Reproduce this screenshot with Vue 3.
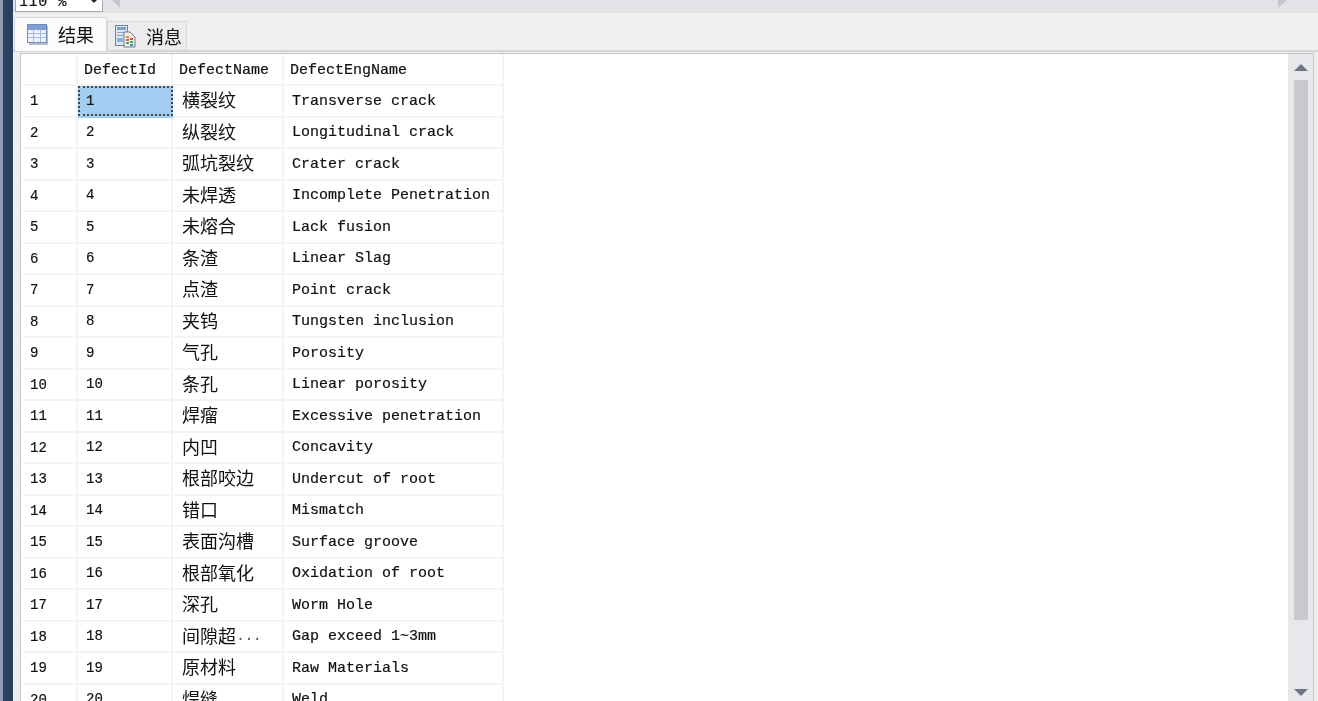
<script setup>
const rows = [
  ['横裂纹', 'Transverse crack'],
  ['纵裂纹', 'Longitudinal crack'],
  ['弧坑裂纹', 'Crater crack'],
  ['未焊透', 'Incomplete Penetration'],
  ['未熔合', 'Lack fusion'],
  ['条渣', 'Linear Slag'],
  ['点渣', 'Point crack'],
  ['夹钨', 'Tungsten inclusion'],
  ['气孔', 'Porosity'],
  ['条孔', 'Linear porosity'],
  ['焊瘤', 'Excessive penetration'],
  ['内凹', 'Concavity'],
  ['根部咬边', 'Undercut of root'],
  ['错口', 'Mismatch'],
  ['表面沟槽', 'Surface groove'],
  ['根部氧化', 'Oxidation of root'],
  ['深孔', 'Worm Hole'],
  ['间隙超', 'Gap exceed 1~3mm', '...'],
  ['原材料', 'Raw Materials'],
  ['焊缝', 'Weld'],
]
</script>

<template>
  <div class="page">
    <div class="edge"></div>
    <div class="main">
      <div class="topbar">
        <div class="combo">
          <span class="combo-text">110 %</span>
          <svg class="combo-arrow" width="12" height="6" viewBox="0 0 12 6"><path d="M1 0h10L6 5z" fill="#222"/></svg>
        </div>
        <svg class="hs-left" width="8" height="8" viewBox="0 0 8 8"><path d="M0 0h8v8z" fill="#c6c6ca"/></svg>
        <div class="spacer"></div>
        <svg class="hs-right" width="9" height="8" viewBox="0 0 9 8"><path d="M0 0h9L0 8z" fill="#c6c6ca"/></svg>
      </div>
      <div class="tabs">
        <div class="tab active">
          <svg width="21" height="21" viewBox="0 0 21 21">
            <rect x="2" y="2" width="19" height="19" fill="#b9bcc4"/>
            <rect x="0.500" y="0.500" width="19" height="18" fill="#eef2fa" stroke="#6e8cbc"/>
            <rect x="1" y="1" width="18" height="5" fill="#7f9fd2"/>
            <path d="M1 9.500h18M1 13.500h18M6.500 6v12M13.500 6v12" stroke="#a9bad8" fill="none"/>
          </svg>
          <span>结果</span>
        </div>
        <div class="tab">
          <svg width="22" height="24" viewBox="0 0 22 24">
            <rect x="1.500" y="1.500" width="12" height="20" fill="#dfe7f3" stroke="#6f7f9c"/>
            <rect x="3" y="3" width="9" height="3" fill="#7f9fd2"/>
            <path d="M3 8.500h9M3 11.500h9" stroke="#8fa0bb"/>
            <rect x="3" y="14" width="6" height="4" fill="#8fb0dc"/>
            <path d="M10 8h6l5 5v10H10z" fill="#f4f2e6" stroke="#70788a"/>
            <rect x="12" y="12" width="3" height="2" fill="#d98a3a"/>
            <rect x="16" y="14" width="3" height="2" fill="#d9534f"/>
            <rect x="12" y="15" width="3" height="2" fill="#d9534f"/>
            <rect x="16" y="17" width="3" height="2" fill="#4aa35a"/>
            <rect x="12" y="18" width="3" height="2" fill="#4aa35a"/>
            <rect x="16" y="20" width="3" height="2" fill="#4a7fc0"/>
          </svg>
          <span>消息</span>
        </div>
      </div>
      <div class="frame">
        <div class="grid">
          <div class="table">
            <div class="row head">
              <div class="c num"></div>
              <div class="c id">DefectId</div>
              <div class="c name">DefectName</div>
              <div class="c eng">DefectEngName</div>
            </div>
            <div v-for="(r, i) in rows" :key="i" class="row">
              <div class="c num">{{ i + 1 }}</div>
              <div class="c id" :class="{ sel: i === 0 }">{{ i + 1 }}</div>
              <div class="c name">{{ r[0] }}<span v-if="r[2]" class="dots">{{ r[2] }}</span></div>
              <div class="c eng">{{ r[1] }}</div>
            </div>
          </div>
        </div>
        <div class="scroll">
          <svg class="arrow" width="14" height="8" viewBox="0 0 14 8"><path d="M7 0l7 7H0z" fill="#6d7388"/></svg>
          <div class="thumb"></div>
          <div class="grow"></div>
          <svg class="arrow" width="14" height="8" viewBox="0 0 14 8"><path d="M0 0h14L7 7z" fill="#6d7388"/></svg>
        </div>
      </div>
    </div>
  </div>
</template>

<style>
html, body { margin: 0; padding: 0; overflow: hidden; background: #f0f0f2; }
</style>

<style scoped>
.page {
  display: flex;
  width: 1318px;
  height: 701px;
  overflow: hidden;
  background: #eeeeef;
  font-family: "Liberation Mono", monospace;
  color: #111;
  filter: blur(0.35px);
}
.edge {
  width: 10px;
  margin-left: 3px;
  flex: none;
  background: #2b3f60;
  box-shadow: -3px 0 0 #8f9db5;
}
.main { flex: 1; min-width: 0; display: flex; flex-direction: column; }
.topbar {
  height: 13px;
  flex: none;
  display: flex;
  background: #e4e4e8;
  overflow: hidden;
}
.combo {
  width: 88px;
  height: 22px;
  margin: -10px 0 0 2px;
  box-sizing: border-box;
  border: 1px solid #a8a8ae;
  background: #fff;
  display: flex;
  align-items: center;
  justify-content: space-between;
  padding: 0 2px 0 3px;
  font: 15px "Liberation Mono", monospace;
  flex: none;
}
.combo-text { margin-top: 2px; letter-spacing: 0.6px; -webkit-text-stroke: 0.2px #111; }
.hs-left { margin: 0 0 0 9px; flex: none; }
.spacer { flex: 1; }
.hs-right { margin-right: 31px; flex: none; }
.tabs {
  height: 39px;
  flex: none;
  display: flex;
  align-items: flex-end;
  padding-left: 1px;
  box-sizing: border-box;
  font: 18px "Noto Sans CJK SC", sans-serif;
  background: #f0f0f1;
  border-bottom: 2px solid #d4d5d9;
}
.tab {
  display: flex;
  align-items: center;
  gap: 10px;
  box-sizing: border-box;
  height: 29px;
  width: 80px;
  padding-left: 6px;
  border: 1px solid #d8d8dc;
  border-bottom: 0;
  background: #ececee;
  margin-left: 0;
}
.tab.active {
  width: 93px;
  height: 34px;
  gap: 10px;
  padding-left: 12px;
  margin-bottom: -1px;
  background: #fbfbfb;
  position: relative;
}
.tab.active span { margin-top: -1px; }
.frame {
  flex: 1;
  min-height: 0;
  margin: 1px 4px 0 7px;
  display: flex;
  border: 1px solid #c6c6ca;
  border-bottom: 0;
  background: #fff;
  overflow: hidden;
}
.grid { flex: 1; min-width: 0; padding-left: 2px; overflow: hidden; }
.table { width: 481px; }
.row {
  display: flex;
  height: 31.5px;
  box-sizing: border-box;
  border-bottom: 2px solid #f4f4f4;
  border-right: 2px solid #f4f4f4;
}
.head { height: 32px; }
.c {
  box-sizing: border-box;
  flex: none;
  display: flex;
  align-items: center;
  border-right: 2px solid #f4f4f4;
  font-size: 15px;
  white-space: nowrap;
  overflow: hidden;
  -webkit-text-stroke: 0.2px #111;
}
.num { width: 55px; padding-left: 7px; font-size: 14px; padding-top: 1px; }
.id { width: 95px; padding-left: 8px; font-size: 14px; }
.name {
  width: 111px;
  padding-left: 9px;
  padding-bottom: 3px;
  font-family: "Noto Sans CJK SC", sans-serif;
  font-size: 18px;
  -webkit-text-stroke: 0;
}
.dots {
  font-family: "Liberation Mono", monospace;
  font-size: 15px;
  letter-spacing: -0.6px;
  margin-top: 3px;
  color: #555;
}
.eng { width: 218px; padding-left: 8px; padding-top: 1px; border-right: 0; }
.head .id, .head .name, .head .eng {
  font-family: "Liberation Mono", monospace;
  font-size: 15px;
  padding: 2px 0 0 6px;
  -webkit-text-stroke: 0.2px #111;
}
.sel {
  background: #a3cdf0;
  box-shadow: 0 2px 0 #a3cdf0;
  outline: 2px dotted #444;
  outline-offset: -2px;
  border-right: 0;
}
.scroll {
  width: 25px;
  flex: none;
  background: #e8e8ec;
  display: flex;
  flex-direction: column;
  align-items: center;
  padding: 10px 0 4px;
  box-sizing: border-box;
}
.arrow { flex: none; }
.thumb {
  width: 14px;
  height: 540px;
  margin-top: 8px;
  background: #c8c9ce;
  flex: none;
}
.grow { flex: 1; }
</style>
